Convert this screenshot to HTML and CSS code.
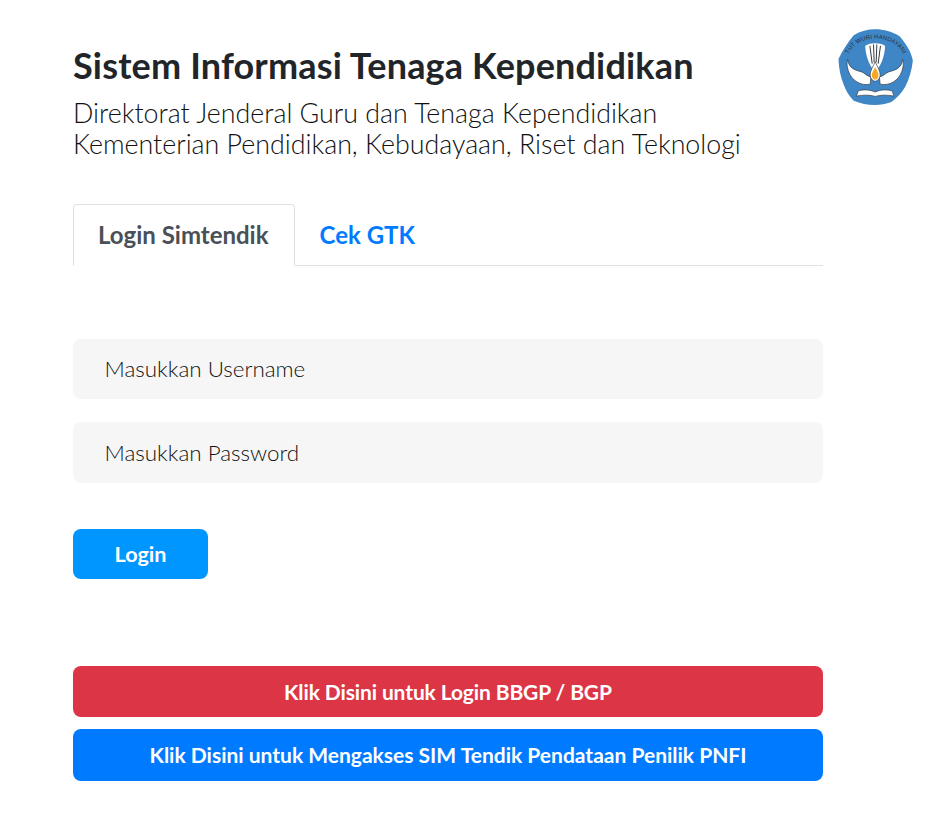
FILE: index.html
```html
<!DOCTYPE html>
<html lang="id">
<head>
<meta charset="utf-8">
<title>Sistem Informasi Tenaga Kependidikan</title>
<link rel="stylesheet" href="styles.css">
</head>
<body>
<main class="page">
  <header class="head">
    <div class="titles">
      <h1>Sistem Informasi Tenaga Kependidikan</h1>
      <p class="sub">Direktorat Jenderal Guru dan Tenaga Kependidikan<br>Kementerian Pendidikan, Kebudayaan, Riset dan Teknologi</p>
    </div>
    <svg class="logo" viewBox="50 38 232 236" width="77" height="78" aria-hidden="true">
      <defs><path id="arc" d="M78 136 C92 48 238 48 256 136"/></defs>
      <path d="M165 42 C190 42 218 50 238 62 C258 84 274 110 279 136 C276 165 268 192 256 216 C244 236 230 252 214 262 C198 268 180 271 165 271 C142 271 120 266 100 258 C86 244 76 228 70 210 C60 186 55 160 54 132 C66 106 82 82 100 60 C120 48 142 42 165 42Z" fill="#3e86c6"/>
      <text class="logo-text"><textPath href="#arc" startOffset="50%" text-anchor="middle">TUT WURI HANDAYANI</textPath></text>
      <path d="M165 84 C150 84 140 88 135 92 C136 116 142 140 156 160 L174 160 C188 140 194 116 195 92 C190 88 180 84 165 84Z" fill="#fff"/>
      <path d="M149 92 L156 146 M160 88 L162 142 M170 88 L168 142 M181 92 L174 146" stroke="#33383f" stroke-width="3" fill="none"/>
      <path d="M82 133 C84 160 106 166 122 170 C134 174 140 184 152 186 L150 208 C122 214 94 198 84 168 C80 156 78 144 82 133Z" fill="#fff" stroke="#33383f" stroke-width="2"/>
      <path d="M248 133 C246 160 224 166 208 170 C196 174 190 184 178 186 L180 208 C208 214 236 198 246 168 C250 156 252 144 248 133Z" fill="#fff" stroke="#33383f" stroke-width="2"/>
      <path d="M165 140 C158 156 149 168 150 182 C152 194 160 199 165 199 C170 199 178 194 180 182 C181 168 172 156 165 140Z" fill="#fff" stroke="#33383f" stroke-width="2"/>
      <path d="M165 156 C160 167 154 174 155 183 C157 191 161 194 165 194 C169 194 173 191 175 183 C176 174 170 167 165 156Z" fill="#f5a623"/>
      <path d="M165 232 C150 224 128 224 114 228 L108 244 C128 240 150 240 165 245 C180 240 202 240 222 244 L216 228 C202 224 180 224 165 232Z" fill="#fff" stroke="#33383f" stroke-width="2"/>
    </svg>
  </header>
  <nav class="tabs">
    <a class="tab active">Login Simtendik</a>
    <a class="tab">Cek GTK</a>
  </nav>
  <form class="form">
    <input class="field" placeholder="Masukkan Username">
    <input class="field" placeholder="Masukkan Password">
    <button type="button" class="btn login">Login</button>
  </form>
  <div class="links">
    <a class="btn wide red">Klik Disini untuk Login BBGP / BGP</a>
    <a class="btn wide blue">Klik Disini untuk Mengakses SIM Tendik Pendataan Penilik PNFI</a>
  </div>
</main>
</body>
</html>
```
FILE: styles.css
```css
* { box-sizing: border-box; }
body { margin: 0; background: #fff; font-family: Lato, sans-serif; color: #212529; }
.page { width: 750px; margin-left: 73px; padding-top: 28px; }
.head { display: flex; justify-content: space-between; width: 841px; }
.titles { padding-top: 15px; }
h1 { margin: 0; font-size: 36px; line-height: 44px; font-weight: 700; letter-spacing: 0.17px; }
.sub { margin: 11px 0 0; font-size: 26.8px; line-height: 31px; font-weight: 300; color: #111; }
.logo { flex: none; }
.logo-text { font-family: "Liberation Sans", sans-serif; font-size: 18px; fill: #2b3036; letter-spacing: 0.3px; }
.tabs { display: flex; margin-top: 44px; border-bottom: 1px solid #dee2e6; height: 62px; }
.tab { padding: 0 25px 0 24px; font-size: 24px; font-weight: 700; line-height: 60px; color: #007bff; border: 1px solid transparent; border-radius: 4px 4px 0 0; height: 62px; }
.tab.active { color: #495057; background: #fff; border-color: #dee2e6 #dee2e6 #fff; }
.form { display: flex; flex-direction: column; align-items: flex-start; gap: 23px; padding-top: 73px; }
.field { width: 100%; height: 60.25px; border: 0; border-radius: 8px; background: #f6f6f6; padding: 0 31.5px 0.6px; font: 300 22.4px Lato, sans-serif; }
.field::placeholder { color: #111; opacity: 1; }
.btn { display: block; border: 0; color: #fff; font-family: Lato, sans-serif; font-weight: 700; text-align: center; border-radius: 8px; }
.login { width: 135px; height: 50px; background: #0096ff; font-size: 21.6px; margin-top: 23.5px; }
.links { display: flex; flex-direction: column; gap: 12px; margin-top: 87px; }
.wide { height: 51.4px; line-height: 51.4px; font-size: 21px; }
.red { background: #dc3545; letter-spacing: -0.12px; }
.blue { background: #007bff; }
```
